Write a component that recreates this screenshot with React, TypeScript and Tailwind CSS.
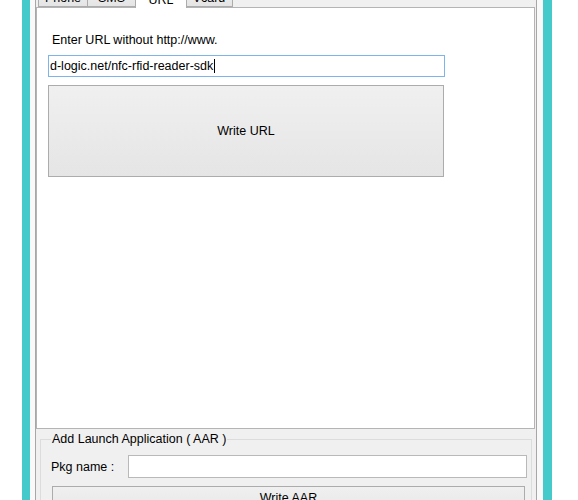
import React from "react";

const Tab = ({ label, w, selected }: { label: string; w: string; selected?: boolean }) => (
  <div
    className={
      selected
        ? `${w} h-[22px] -mb-px flex items-end justify-center bg-white border border-b-0 border-[#acacac] z-10`
        : `${w} h-[21px] flex items-end justify-center bg-gradient-to-b from-[#f0f0f0] to-[#e5e5e5] border border-[#acacac] -ml-px first:ml-0`
    }
  >
    <span className="leading-[14px] pb-[1px]">{label}</span>
  </div>
);

export default function App() {
  return (
    <div className="w-[578px] h-[500px] overflow-hidden bg-white text-[12.5px] text-black font-['Liberation_Sans',Arial,sans-serif]">
      <div className="ml-[22px] w-[530px] h-[520px] border-l-[8px] border-r-[9px] border-[#44caca] flex bg-[#f9f9f9]">
        <div className="ml-[5px] mr-[6px] flex-1 bg-[#f0f0f0] border-x border-[#a7a7a7] flex flex-col">
          {/* Tab control */}
          <div className="flex flex-col mr-[1px]">
            <div className="flex items-end h-[7px] pl-[2px]">
              <div className="flex items-end -mt-[15px]">
                <Tab label="Phone" w="w-[50px]" />
                <Tab label="SMS" w="w-[49px]" />
                <div className="-ml-px -mr-px flex items-end">
                  <Tab label="URL" w="w-[52px]" selected />
                </div>
                <Tab label="Vcard" w="w-[48px]" />
              </div>
            </div>
            <div className="h-[422px] bg-white border border-[#b4b4b4] pl-[11px] pt-[25px] flex flex-col">
              <span className="ml-[4px] leading-[14px]">Enter URL without http://www.</span>
              <div className="mt-[8px] w-[397px] h-[22px] border border-[#7eb4ea] flex items-center pl-[1px] bg-white">
                <span className="leading-[14px]">d-logic.net/nfc-rfid-reader-sdk</span>
                <span className="w-px h-[14px] bg-black ml-[1px]" />
              </div>
              <button className="mt-[8px] w-[396px] h-[92px] border border-[#acacac] bg-gradient-to-b from-[#f0f0f0] to-[#e5e5e5] flex items-center justify-center">
                <span className="leading-[14px]">Write URL</span>
              </button>
            </div>
          </div>
          {/* Group box */}
          <fieldset className="mt-[3px] ml-[4px] mr-[4px] border border-[#dcdcdc] pb-[10px]">
            <legend className="ml-[10px] px-[1px] leading-[14px]">Add Launch Application ( AAR )</legend>
            <div className="mt-[9px] flex items-center pl-[10px]">
              <span className="w-[77px] leading-[14px]">Pkg name :</span>
              <div className="w-[399px] h-[23px] bg-white border border-[#b9b9b9]" />
            </div>
            <button className="mt-[8px] ml-[11px] w-[473px] h-[30px] border border-[#acacac] bg-gradient-to-b from-[#f0f0f0] to-[#e5e5e5] flex items-start justify-center pt-[4px]">
              <span className="leading-[14px]">Write AAR</span>
            </button>
          </fieldset>
        </div>
      </div>
    </div>
  );
}
